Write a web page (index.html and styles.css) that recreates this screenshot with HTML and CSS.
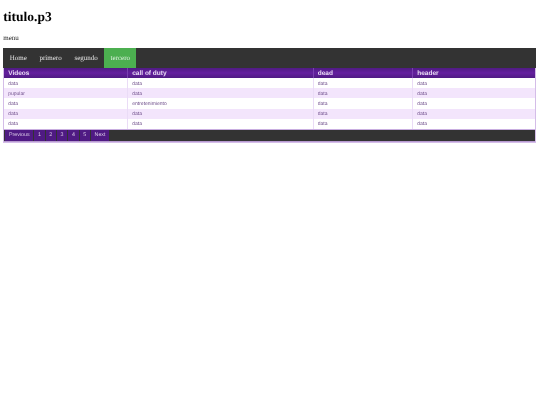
FILE: index.html
```html
<!DOCTYPE html>
<html lang="es">
<head>
<meta charset="utf-8">
<title>titulo.p3</title>
<link rel="stylesheet" href="styles.css">
</head>
<body>
<h1 class="title">titulo.p3</h1>
<p class="menu-label">menu</p>
<ul class="nav">
  <li><a href="#">Home</a></li>
  <li><a href="#">primero</a></li>
  <li><a href="#">segundo</a></li>
  <li><a class="active" href="#">tercero</a></li>
</ul>
<div class="datatable">
  <table>
    <thead>
      <tr><th>Videos</th><th>call of duty</th><th>dead</th><th>header</th></tr>
    </thead>
    <tbody>
      <tr><td>data</td><td>data</td><td>data</td><td>data</td></tr>
      <tr class="alt"><td>pupular</td><td>data</td><td>data</td><td>data</td></tr>
      <tr><td>data</td><td>entretenimiento</td><td>data</td><td>data</td></tr>
      <tr class="alt"><td>data</td><td>data</td><td>data</td><td>data</td></tr>
      <tr><td>data</td><td>data</td><td>data</td><td>data</td></tr>
    </tbody>
  </table>
  <div class="pager">
    <a href="#">Previous</a><a href="#">1</a><a href="#">2</a><a href="#">3</a><a href="#">4</a><a href="#">5</a><a href="#">Next</a>
  </div>
</div>
</body>
</html>
```
FILE: styles.css
```css
html, body { margin: 0; padding: 0; background: #fff; }
body { padding: 0 4.25px 0 3.25px; font-family: "Liberation Serif", serif; color: #000; text-rendering: geometricPrecision; filter: blur(0.3px); }
.title { margin: 0; padding-top: 9px; font-size: 13.5px; line-height: 16px; font-weight: bold; }
.menu-label { margin: 9px 0 0; font-size: 7px; line-height: 8px; color: #222; }
.nav { list-style: none; margin: 6px 0 0; padding: 0; display: flex; height: 20px; background: #333; }
.nav a { display: block; padding: 0 6.4px; line-height: 20px; font-size: 7px; color: #e4e4e4; text-decoration: none; }
.nav a.active { background: #4caf50; color: #dff0e0; }
.datatable { border: 1px solid #d4bde8; border-top: 0; font-family: "Liberation Sans", sans-serif; background: #fff; }
table { width: 100%; border-collapse: collapse; table-layout: fixed; font-size: 5px; }
th, td { box-sizing: border-box; }
th:nth-child(1), td:nth-child(1) { width: 123.5px; }
th:nth-child(2), td:nth-child(2) { width: 185.5px; }
th:nth-child(3), td:nth-child(3) { width: 99.5px; }
th { height: 10px; padding: 0 4px; text-align: left; color: #e9dcf4; font-size: 6.5px; font-weight: bold; background: linear-gradient(#4f1a83, #641f9e 50%, #4f1a83); }
th + th, td + td { border-left: 1px solid #eadcf6; }
th + th { border-left-color: #7a3fb0; }
td { height: 10.2px; padding: 1px 4px 0; color: #70508c; }
tr.alt td { background: #f3e5fc; }
.pager { display: flex; gap: 1px; height: 10.5px; margin-top: 0.5px; padding-left: 1px; background: #333; border-top: 1px solid #c9aee0; border-bottom: 1px solid #b79ad0; }
.pager a { padding: 0 3.7px; background: #4f1a83; color: #dccde9; font-size: 5.3px; line-height: 11.5px; text-decoration: none; }
```
